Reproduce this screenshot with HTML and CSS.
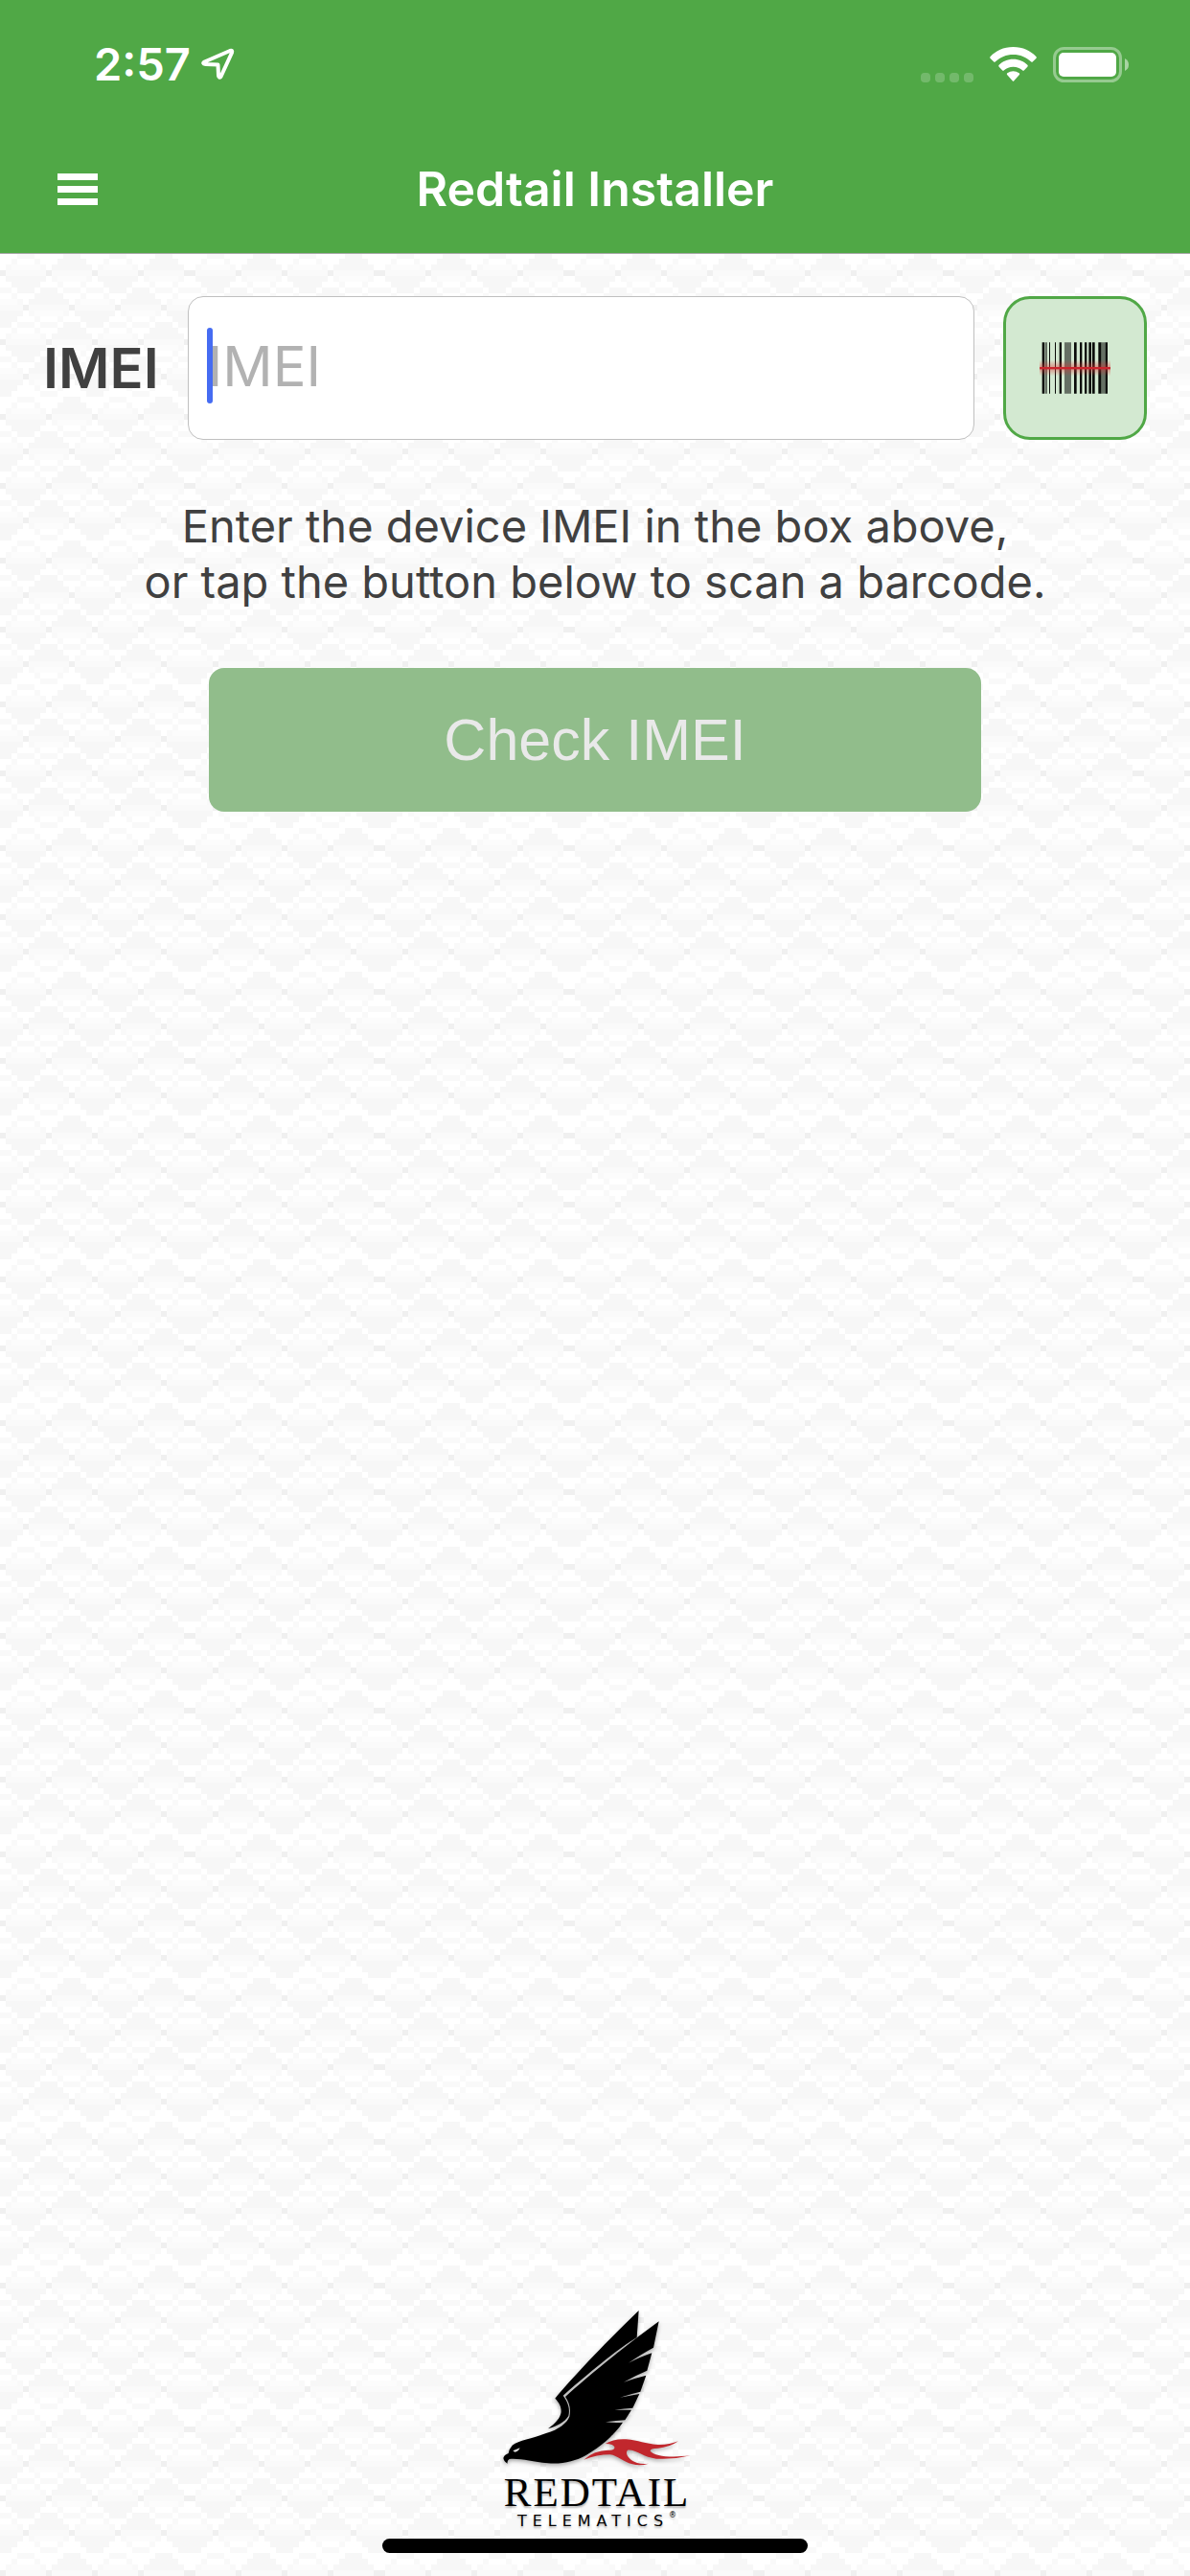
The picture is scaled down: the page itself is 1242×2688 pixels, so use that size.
FILE: index.html
```html
<!DOCTYPE html>
<html lang="en">
<head>
<meta charset="utf-8">
<meta name="viewport" content="width=device-width, initial-scale=1">
<title>Redtail Installer</title>
<link rel="stylesheet" href="styles.css">
</head>
<body>
<header class="header">
  <div class="status">
    <div class="status-left">
      <span class="time">2:57</span>
      <svg class="location" viewBox="0 0 36 36" aria-hidden="true"><path d="M4.500 15.500 31 4Q34 3 33 6L21.500 31Q19.500 33 19 30L18.500 18.500 5.500 18Q1.500 17.500 4.500 15.500Z"/></svg>
    </div>
    <div class="status-right">
      <svg class="signal" viewBox="0 0 55 10" aria-hidden="true"><rect width="10" height="10" rx="4"/><rect x="15" width="10" height="10" rx="4"/><rect x="30" width="10" height="10" rx="4"/><rect x="45" width="10" height="10" rx="4"/></svg>
      <svg class="wifi" viewBox="0 0 147 108" aria-hidden="true"><path d="M73.500 0C104 0 128 12 145 30Q148 33 145 36L135 46Q132 49 129 46C114 32 96 24 73.500 24S33 32 18 46Q15 49 12 46L2 36Q-1 33 2 30C19 12 43 0 73.500 0Z"/><path d="M73.500 38C92 38 107 45 118 56Q121 59 118 62L108 73Q105 76 102 73C94 66 85 62 73.500 62S53 66 45 73Q42 76 39 73L29 62Q26 59 29 56C40 45 55 38 73.500 38Z"/><path d="M73.500 76Q83 76 92 82Q95 85 92 88L76 106Q73.500 109 71 106L55 88Q52 85 55 82Q64 76 73.500 76Z"/></svg>
      <svg class="battery" viewBox="0 0 79 37" aria-hidden="true"><rect class="battery-frame" x="1.500" y="1.500" width="69" height="34" rx="10"/><rect x="6" y="6" width="60" height="25" rx="5"/><path class="battery-cap" d="M75 12Q79 14 79 18.500T75 25Z"/></svg>
    </div>
  </div>
  <div class="navbar">
    <button class="menu" type="button" aria-label="Menu"><span></span><span></span><span></span></button>
    <h1 class="title">Redtail Installer</h1>
  </div>
</header>
<main class="main">
  <form class="form">
    <div class="row">
      <label class="label" for="imei">IMEI</label>
      <div class="field">
        <input class="input" id="imei" type="text" inputmode="numeric" placeholder="IMEI">
        <span class="caret"></span>
      </div>
      <button class="scan" type="button" aria-label="Scan barcode">
        <svg class="barcode" viewBox="0 0 222 162" aria-hidden="true">
          <defs><linearGradient id="glow" x2="0" y2="1"><stop stop-color="#d33" stop-opacity="0"/><stop offset=".5" stop-color="#d33" stop-opacity=".5"/><stop offset="1" stop-color="#d33" stop-opacity="0"/></linearGradient></defs>
          <path class="bars" d="M8 1h8v160H8zM30 1h3v160h-3zM48 1h3v160h-3zM62 1h7v160h-7zM108 1h8v160h-8zM126 1h7v160h-7zM141 1h7v160h-7zM154 1h8v160h-8zM165 1h8v160h-8zM184 1h10v160h-10zM205 1h8v160h-8z"/>
          <path class="bars-light" d="M18 1h6v160h-6zM78 1h21v160H78zM194 1h11v160h-11z"/>
          <rect y="56" width="222" height="50" fill="url(#glow)"/>
          <rect y="78" width="222" height="7" fill="#c9252d"/>
        </svg>
      </button>
    </div>
    <p class="hint">Enter the device IMEI in the box above,<br>or tap the button below to scan a barcode.</p>
    <button class="submit" type="submit" disabled>Check IMEI</button>
  </form>
</main>
<footer class="footer">
  <div class="brand">
    <svg class="hawk" viewBox="75 60 588 492" aria-hidden="true">
      <path class="ink" d="M500 63 494 147C440 180 370 236 263 329C280 352 285 372 280 393C268 412 245 425 216 433C240 415 255 398 257 381C258 364 250 350 238 338C300 265 370 190 500 63Z"/>
      <path class="ink" d="M563 97 546 179Q510 198 468 227Q508 207 541 196L526 251Q490 266 453 287Q490 274 523 266L505 317Q475 324 441 335Q475 329 502 324L481 368Q455 370 424 374Q452 375 477 374L457 406Q430 408 396 412Q425 415 450 413C425 450 385 487 335 516C300 535 260 545 215 541C165 536 130 525 95 528Q87 532 89 542Q78 536 76 525Q78 515 92 510Q94 496 104 485C125 468 165 465 210 447C250 435 275 415 283 395C288 370 283 352 270 333C350 262 430 195 563 97Z"/>
      <path class="line" d="M106 502 128 493Q122 506 112 506ZM99 507 105 507"/>
      <path class="red" d="M396 480Q420 464 460 466C500 470 520 480 560 483Q595 484 624 472Q595 492 560 494Q535 494 536 503C550 520 600 524 663 517Q610 530 555 527C515 523 490 497 465 500C455 510 470 532 495 540Q510 544 531 542Q505 550 480 544C450 537 435 517 410 514Q370 514 328 530Q360 500 405 500C425 502 431 490 416 483Q408 480 396 480Z"/>
    </svg>
    <div class="brand-name">REDTAIL</div>
    <div class="brand-sub">TELEMATICS<sup>®</sup></div>
  </div>
  <div class="home"></div>
</footer>
</body>
</html>
```
FILE: styles.css
```css
* { box-sizing: border-box; }

body {
  margin: 0;
  min-height: 100vh;
  display: flex;
  flex-direction: column;
  font-family: Inter, "Liberation Sans", sans-serif;
  color: #404040;
  /* woven diamond tile, 33 by 25 cells of 6px */
  background: #fff url("data:image/svg+xml,%3Csvg xmlns='http://www.w3.org/2000/svg' xmlns:xlink='http://www.w3.org/1999/xlink' width='198' height='150' viewBox='0 0 33 25' shape-rendering='crispEdges'%3E%3Cdefs%3E%3Cg id='d'%3E%3Cpath fill='%23f7f7f7' d='M-1 0h3v1h1v1h1v1h-7v-1h1v-1h1z'/%3E%3Cpath fill='%23fafafa' d='M-3 3h7v1h-7z'/%3E%3Cpath fill='%23fcfcfc' d='M-2 4h5v1h-5z'/%3E%3Cpath fill='%23f9f9f9' d='M-3 4h1v1h-1zM3 4h1v1h-1zM-2 5h1v1h-1zM2 5h1v1h-1zM-1 6h3v1h-3z'/%3E%3C/g%3E%3Cg id='l'%3E%3Cuse xlink:href='%23d' transform='matrix(1 0 0 -1 0 7)'/%3E%3C/g%3E%3Cg id='r'%3E%3Cuse xlink:href='%23l' x='4'/%3E%3Cuse xlink:href='%23d' x='12'/%3E%3Cuse xlink:href='%23l' x='20'/%3E%3Cuse xlink:href='%23d' x='28'/%3E%3Cuse xlink:href='%23l' y='6'/%3E%3Cuse xlink:href='%23d' x='8' y='6'/%3E%3Cuse xlink:href='%23l' x='16' y='6'/%3E%3Cuse xlink:href='%23d' x='24' y='6'/%3E%3Cuse xlink:href='%23l' x='32' y='6'/%3E%3Cpath fill='%23f0f0f0' d='M0 3h1v1H0zM8 3h1v1H8zM16 3h1v1h-1zM24 3h1v1h-1zM32 3h1v1h-1zM4 9h1v1H4zM12 9h1v1h-1zM20 9h1v1h-1zM28 9h1v1h-1z'/%3E%3C/g%3E%3C/defs%3E%3Cuse xlink:href='%23r'/%3E%3Cuse xlink:href='%23r' y='12'/%3E%3C/svg%3E") 0 264px;
}

button { font: inherit; margin: 0; padding: 0; border: 0; }

.header {
  background: #50a846;
  color: #fff;
  border-bottom: 1px solid #a8a8a8;
}

.status {
  height: 134px;
  padding: 0 64px 0 98px;
  display: flex;
  align-items: center;
  justify-content: space-between;
}

.status-left { display: flex; align-items: center; gap: 10px; }
.time { font-size: 47px; line-height: 60px; font-weight: 600; }
.location { width: 36px; height: 36px; fill: none; stroke: #fff; stroke-width: 4; stroke-linejoin: round; }
.status-right { display: flex; align-items: center; gap: 17px; fill: #fff; }
.signal { width: 55px; height: 10px; opacity: .2; align-self: flex-end; }
.wifi { width: 49px; height: 36px; }
.battery { width: 79px; height: 37px; }
.battery-frame { fill: none; stroke: #fff; stroke-width: 3; opacity: .4; }
.battery-cap { opacity: .5; }

.navbar {
  height: 130px;
  padding: 0 60px 4px;
  display: grid;
  grid-template-columns: 42px 1fr 42px;
  align-items: center;
}

.menu { display: grid; gap: 6px; background: none; }
.menu span { height: 7px; background: #fff; }
.title { margin: 0; font-size: 50px; line-height: 60px; font-weight: 600; text-align: center; }

.main { flex: 1; padding: 44px 45px; }
.form { display: flex; flex-direction: column; align-items: center; }
.row { align-self: stretch; display: flex; align-items: center; gap: 30px; }
.label { font-size: 58px; line-height: 72px; font-weight: 600; }

.field { position: relative; flex: 1; }
.input {
  display: block;
  width: 100%;
  height: 150px;
  padding: 0 20px 4px;
  border: 1px solid #c0c0c0;
  border-radius: 16px;
  background: #fff;
  color: #404040;
  font: 400 58px/72px Inter, "Liberation Sans", sans-serif;
}
.input::placeholder { color: #b2b2b2; opacity: 1; }
.caret {
  position: absolute;
  left: 20px;
  top: 33px;
  width: 6px;
  height: 79px;
  border-radius: 3px;
  background: #466cf2;
}

.scan {
  width: 150px;
  height: 150px;
  border: 3px solid #50a846;
  border-radius: 28px;
  background: #d3e9d1;
  display: grid;
  place-items: center;
}
.barcode { width: 74px; height: 54px; }
.bars { fill: #0a0c0a; }
.bars-light { fill: #657064; }

.hint { margin: 61px 0; font-size: 47px; line-height: 58px; text-align: center; }

.submit {
  width: 70%;
  height: 150px;
  border-radius: 16px;
  background: #91bd8b;
  color: #e9e9e9;
  font: 400 61px/72px "Liberation Sans", Arial, sans-serif;
}

.footer { display: flex; flex-direction: column; align-items: center; padding-bottom: 24px; }
.brand {
  display: flex;
  flex-direction: column;
  align-items: center;
  padding: 0 0 8px 4px;
  color: #000;
}
.hawk { width: 196px; height: 164px; margin-bottom: 7px; filter: drop-shadow(0 2px 2px #0005); }
.ink { fill: #000; }
.red { fill: #c1272d; }
.line { fill: #ddd; }
.brand-name {
  font: 400 43px/40px "Liberation Serif", serif;
  letter-spacing: 2px;
  text-shadow: 0 2px 2px #0004;
}
.brand-sub {
  height: 20px;
  font: 400 16px/20px "DejaVu Sans", sans-serif;
  letter-spacing: 6px;
  text-shadow: 0 2px 2px #0004;
}
.brand-sub sup { font-size: 8px; line-height: 8px; letter-spacing: 0; vertical-align: top; }
.home { width: 444px; height: 15px; border-radius: 8px; background: #000; }
```
